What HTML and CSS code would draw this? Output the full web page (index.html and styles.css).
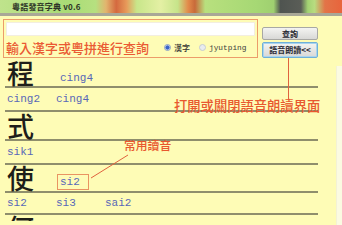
FILE: index.html
```html
<!DOCTYPE html>
<html lang="zh-Hant">
<head>
<meta charset="utf-8">
<title>粵語發音字典 v0.6</title>
<link rel="stylesheet" href="styles.css">
</head>
<body>
<div class="app">
  <div class="titlebar"><span class="title">粵語發音字典 v0.6</span></div>
  <div class="main">
    <div class="search">
      <div class="input"></div>
      <div class="query">
        <span class="hint">輸入漢字或粵拼進行查詢</span>
        <span class="radio on"></span><span class="opt">漢字</span>
        <span class="radio"></span><span class="opt mono">jyutping</span>
      </div>
    </div>
    <div class="buttons">
      <div class="btn">查詢</div>
      <div class="btn focus">語音朗讀&lt;&lt;</div>
    </div>
  </div>
  <div class="dict">
    <div class="char-row r1"><span class="char">程</span><span class="read main-read">cing4</span></div>
    <div class="read-row"><span class="read">cing2</span><span class="read">cing4</span></div>
    <div class="char-row r2"><span class="char">式</span></div>
    <div class="read-row"><span class="read">sik1</span></div>
    <div class="char-row r3"><span class="char">使</span><span class="read main-read boxed">si2</span></div>
    <div class="read-row short"><span class="read">si2</span><span class="read">si3</span><span class="read">sai2</span></div>
    <div class="char-row last"><span class="char">何</span></div>
  </div>
  <div class="side"></div>
  <div class="note note-voice">打開或關閉語音朗讀界面</div>
  <div class="note note-common">常用讀音</div>
  <svg class="pointers" width="342" height="225" viewBox="0 0 342 225">
    <line x1="288.5" y1="58" x2="288.5" y2="99" stroke="#e0623e" stroke-width="1"/>
    <line x1="91" y1="178" x2="128" y2="155" stroke="#e0623e" stroke-width="1"/>
  </svg>
</div>
</body>
</html>
```
FILE: styles.css
```css
* { box-sizing: border-box; margin: 0; padding: 0; }
html, body { width: 342px; height: 225px; overflow: hidden; }
body { background: #fefcb6; font-family: "Noto Sans CJK TC", "Noto Sans", sans-serif; }
.app { position: relative; width: 342px; height: 225px; overflow: hidden; background: #fefcb6; }

.titlebar {
  height: 16px;
  border-bottom: 3px solid #a9a897;
  background: linear-gradient(to right,
    #bfe38c 0%, #a9dc76 20%, #b6e080 28%, #e2b46e 31%, #d4693f 34%, #e79a5a 37%,
    #c8e68a 40%, #e4f0a4 47%, #c6e48a 52%, #e38a4a 55%, #c86a3a 57%, #b8e07e 60%,
    #a6d874 75%, #9fd070 80%, #4f5450 82%, #5a5d57 88%, #a2d272 90%, #b8dc80 92%,
    #e27448 95%, #e8643c 100%);
  padding: 2px 0 0 12px;
}
.title { font-size: 8px; font-weight: 700; color: #2d3326; line-height: 10px; letter-spacing: 0.2px; display: block; }

.main { display: flex; gap: 4px; padding: 3px 0 0 3px; }
.search {
  width: 255px; height: 39px;
  border: 1.5px solid #ec9c6a;
  padding: 2px 2px 0 2px;
  flex: none;
}
.input { height: 14px; background: #ffffff; border: 1px solid #f3eee0; }
.query { display: flex; align-items: center; margin-top: 4px; height: 15px; white-space: nowrap; }
.hint { font-size: 13px; line-height: 14px; color: #ea5a33; font-weight: 500; width: 158px; flex: none; }
.radio {
  width: 7px; height: 7px; border-radius: 50%;
  background: #e9ecef; border: 1px solid #c6ccd2; margin-right: 3px; flex: none;
}
.radio.on { background: radial-gradient(circle, #3a64c8 0 1.8px, #e4e9f2 2.4px); border-color: #8aa0c8; }
.opt { font-size: 8px; color: #333; margin-right: 9px; line-height: 10px; flex: none; font-weight: 500; }
.opt.mono { font-family: "Liberation Mono", monospace; font-size: 7.8px; color: #3d3d3d; margin-right: 0; }

.buttons { display: flex; flex-direction: column; gap: 2px; padding-top: 8px; width: 56px; flex: none; }
.btn {
  height: 13px; font-size: 8px; line-height: 11px; text-align: center; color: #2a2a35;
  background: linear-gradient(#f4f4f2, #d8d8d6);
  border: 1px solid #a8a8a4; border-radius: 2px; font-weight: 700; white-space: nowrap;
}
.btn.focus { height: 16px; line-height: 14px; border: 1px solid #6fb0d8; box-shadow: inset 0 0 0 1px #a8d4ee; }

.dict { margin: 2px 0 0 5px; width: 313px; }
.char-row { height: 28px; border-bottom: 2px solid #8f8e6c; display: flex; align-items: center; padding-left: 2px; }
.char-row.r2 { height: 29px; }
.char-row.last { height: 6px; align-items: flex-start; overflow: hidden; border-bottom: none; }
.char { font-size: 27px; line-height: 26px; color: #1e1e1a; width: 28px; font-weight: 500; flex: none; }
.read { font-family: "Liberation Mono", monospace; font-size: 11px; color: #5868b8; width: 49px; display: inline-block; flex: none; }
.main-read { margin-left: 25px; margin-top: 9px; }
.boxed { border: 1.5px solid #e99462; padding: 1px 2px; margin-left: 22px; width: 32px; line-height: 12px; margin-top: 7px; }
.read-row { height: 24px; border-bottom: 2px solid #8f8e6c; display: flex; align-items: center; padding-left: 2px; }
.read-row.short { height: 22px; }

.side { position: absolute; left: 336px; top: 66px; width: 8px; height: 160px; background: #fbfbe2; border-left: 1px solid #f3f2d6; }
.note { position: absolute; color: #e8582f; white-space: nowrap; font-weight: 500; }
.note-voice { left: 174px; top: 98px; font-size: 13.3px; line-height: 15px; }
.note-common { left: 124px; top: 138px; font-size: 11.8px; line-height: 14px; }
.pointers { position: absolute; left: 0; top: 0; pointer-events: none; }
```
